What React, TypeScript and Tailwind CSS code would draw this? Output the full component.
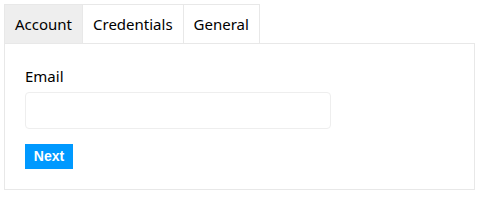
import React, { useState } from "react";

export default function App() {
  const [active, setActive] = useState(0);
  const tabs = ["Account", "Credentials", "General"];
  return (
    <div className="p-1 bg-white" style={{ fontFamily: '"Noto Sans", "Open Sans", sans-serif' }}>
      <div className="flex">
        {tabs.map((t, i) => (
          <button
            key={t}
            onClick={() => setActive(i)}
            className={`h-[40px] px-[10px] text-[15px] text-black border border-[#e8e8e8] -mb-px ${i > 0 ? "-ml-px" : ""} ${i === active ? "bg-[#eeeeee]" : "bg-white"}`}
            style={{ fontFamily: '"Noto Sans", "Open Sans", sans-serif' }}
          >
            {t}
          </button>
        ))}
      </div>
      <div className="w-[471px] h-[147px] border border-[#e8e8e8] px-5 pt-[22px]">
        <label className="block text-[15px] leading-[20px] text-black mb-[6px]">Email</label>
        <input className="block w-[306px] h-[37px] border border-[#eeeeee] rounded-[4px] outline-none" />
        <button
          className="mt-[15px] w-[48px] h-[25px] bg-[#0099ff] text-white text-[14px] font-bold"
          style={{ fontFamily: '"Liberation Sans", Arial, sans-serif' }}
        >
          Next
        </button>
      </div>
    </div>
  );
}
